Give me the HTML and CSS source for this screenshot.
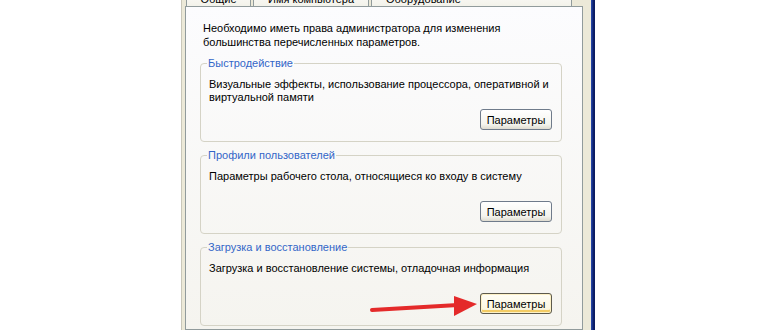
FILE: index.html
```html
<!DOCTYPE html>
<html lang="ru">
<head>
    <meta charset="UTF-8">
    <title>Свойства системы — Дополнительно</title>
    <link rel="stylesheet" href="styles.css">
</head>
<body>
    <div class="desk">
        <div class="window">
            <div class="sheet">
                <div class="tabs">
                    <div class="tab tab-general">Общие</div>
                    <div class="tab tab-name">Имя компьютера</div>
                    <div class="tab tab-hardware">Оборудование</div>
                </div>

                <div class="panel">
                    <p class="intro">Необходимо иметь права администратора для изменения<br>большинства перечисленных параметров.</p>

                    <fieldset class="group">
                        <legend>Быстродействие</legend>
                        <p class="desc">Визуальные эффекты, использование процессора, оперативной и<br>виртуальной памяти</p>
                        <div class="actions"><button type="button">Параметры</button></div>
                    </fieldset>

                    <fieldset class="group">
                        <legend>Профили пользователей</legend>
                        <p class="desc">Параметры рабочего стола, относящиеся ко входу в систему</p>
                        <div class="actions"><button type="button">Параметры</button></div>
                    </fieldset>

                    <fieldset class="group">
                        <legend>Загрузка и восстановление</legend>
                        <p class="desc">Загрузка и восстановление системы, отладочная информация</p>
                        <div class="actions"><button type="button" class="hot">Параметры</button></div>
                    </fieldset>
                </div>
            </div>
        </div>
        <div class="frame"></div>
    </div>

    <!-- red pointer drawn on top of the dialog -->
    <svg class="arrow" width="110" height="26" viewBox="0 0 110 26">
        <line x1="2" y1="18" x2="88" y2="13" stroke="#e42a2a" stroke-width="4" stroke-linecap="round"/>
        <polygon points="84,4 107,12 84,24" fill="#e42a2a"/>
    </svg>
</body>
</html>
```

FILE: styles.css
```css
body {
    margin: 0;
    height: 330px;
    overflow: hidden;
    background: #ffffff;
    font-family: "Liberation Sans", Arial, sans-serif;
    font-size: 11px;
    color: #000;
}

.desk {
    display: flex;
    height: 330px;
    margin-left: 181px;
}

.window {
    width: 398px;
    padding: 0 8px 0 3px;
    background: #ece9d8;
    border-left: 1px solid #c9c7ba;
}

.frame {
    width: 4px;
    background: linear-gradient(to right, #2a4cb0, #0b1f6b 60%, #0a1a5c);
}

.sheet {
    display: flex;
    flex-direction: column;
    height: 330px;
}

.tabs {
    display: flex;
    align-items: flex-end;
    gap: 2px;
    height: 6px;
    padding-left: 1px;
    overflow: hidden;
}

.tab {
    flex: none;
    box-sizing: border-box;
    height: 20px;
    padding-top: 5px;
    line-height: 14px;
    text-align: center;
    border: 1px solid #919b9c;
    border-bottom: none;
    background: linear-gradient(#ffffff, #f3f2ea);
}

.tab-general { width: 65px; }
.tab-name { width: 116px; }

.tab-hardware {
    width: 201px;
    padding-left: 14px;
    text-align: left;
}

.panel {
    flex: 1;
    padding: 14px 0 0 14px;
    border: 1px solid #919b9c;
    background: linear-gradient(#fcfcfe, #f5f4ef);
}

.intro {
    margin: 0 0 0 3px;
    line-height: 14px;
}

.group {
    box-sizing: border-box;
    width: 362px;
    min-inline-size: auto;
    margin: 7px 0 0;
    padding: 8px 9px 11px 6px;
    border: 1px solid #d5d3c6;
    border-radius: 4px;
}

.group + .group {
    margin-top: 6px;
}

.group legend {
    padding: 0 1px;
    line-height: 14px;
    color: #3366c8;
}

.desc {
    height: 26px;
    margin: 0 0 0 2px;
    line-height: 13px;
}

.actions {
    display: flex;
    justify-content: flex-end;
    margin-top: 5px;
}

button {
    width: 72px;
    height: 21px;
    padding: 0;
    font: inherit;
    color: #000;
    border: 1px solid #6f7b8b;
    border-radius: 3px;
    background: linear-gradient(#ffffff, #f4f4ee 75%, #dedbd0);
}

button.hot {
    border-color: #5d5a4c;
    background: linear-gradient(#fffef6, #fbf7e2 75%, #efe6c3);
    box-shadow: inset 0 0 0 1px #fdf1c6, inset 0 -2px 0 1px #f4cc64;
}

.arrow {
    position: absolute;
    left: 370px;
    top: 292px;
}
```
